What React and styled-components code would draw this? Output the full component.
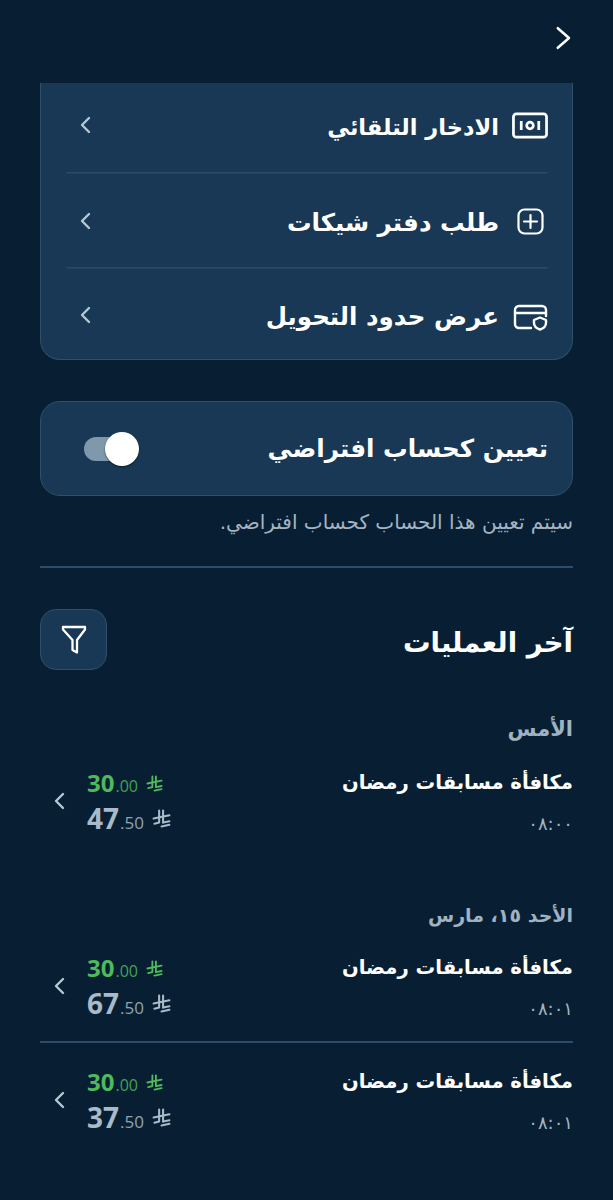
import React from 'react';
import styled, { createGlobalStyle } from 'styled-components';

const Global = createGlobalStyle`
  html, body { margin: 0; padding: 0; background: #081f33; }
  body { font-family: "DejaVu Sans", sans-serif; }
`;
const Page = styled.div`
  width: 613px; height: 1200px; overflow: hidden; direction: rtl; color: #fff;
  background: #081f33;
`;
const TopBar = styled.header`
  height: 83px; box-sizing: border-box; padding: 24px 37px 0 0; display: flex; justify-content: flex-start;
`;
const Content = styled.main`
  padding: 0 40px;
  display: flex; flex-direction: column;
`;
const MenuCard = styled.section`
  background: #183855; border: 1px solid #2e5068; border-top: none;
  border-radius: 0 0 20px 20px; padding: 0 24px 0 25px; height: 277px; box-sizing: border-box;
`;
const MenuRow = styled.div`
  display: flex; align-items: center; height: ${p => p.$h}px;
  padding: ${p => p.$pt || 0}px 0 ${p => p.$pb || 0}px; box-sizing: border-box;
  box-shadow: ${p => p.$last ? 'none' : '0 2px 0 -0.5px #2b4b66'};
`;
const MenuIcon = styled.span`
  width: 36px; height: 36px; display: flex; align-items: center; justify-content: center; flex: none;
  padding-top: ${p => p.$drop || 0}px;
`;
const MenuLabel = styled.span`
  font-size: ${p => p.$tight ? 22.5 : 24.5}px; font-weight: 700; margin-right: 13px; flex: 1; line-height: 36px;
  padding-top: 4px;
`;
const ChevronSlot = styled.span`
  display: flex; margin-left: 10px; color: #b4c8d6;
`;
const ToggleCard = styled.section`
  margin-top: 41px; height: 95px; box-sizing: border-box; background: #183855; border: 1px solid #2e5068;
  border-radius: 20px; display: flex; align-items: center; justify-content: space-between; padding: 0 24px 0 43px;
`;
const ToggleLabel = styled.span`
  font-size: 24.6px; font-weight: 700;
`;
const Track = styled.span`
  position: relative; display: block; width: 45px; height: 24px; border-radius: 12px; background: #7f98ac;
`;
const Knob = styled.span`
  position: absolute; left: 21px; top: -5px; width: 34px; height: 34px; border-radius: 50%; background: #fff;
  box-shadow: 0 1px 2px rgba(0,0,0,.5);
`;
const Hint = styled.p`
  margin: 13px 0 0; font-size: 20px; color: #a3b4c2; line-height: 26px;
`;
const Divider = styled.hr`
  border: none; height: 2px; background: #2d4d68; margin: 31px 0 0;
`;
const SectionHead = styled.div`
  display: flex; align-items: center; justify-content: space-between; margin-top: 41px;
`;
const SectionTitle = styled.h2`
  margin: 0; padding-top: 4px; font-size: 27.5px; font-weight: 700;
`;
const FilterBtn = styled.button`
  width: 67px; height: 61px; border-radius: 16px; background: #183855; border: 1px solid #2e5068; padding: 0;
  display: flex; align-items: center; justify-content: center;
`;
const DayLabel = styled.div`
  font-size: ${p => p.$fs || 21}px; font-weight: 700; color: #9fb2c2; margin-top: ${p => p.$mt}px; line-height: 30px;
`;
const Tx = styled.div`
  display: flex; justify-content: space-between; align-items: flex-start; height: ${p => p.$h || 100}px;
  box-sizing: border-box; padding-top: ${p => p.$pt || 0}px;
  border-bottom: ${p => p.$line ? '2px solid #2d4d68' : 'none'};
`;
const TxMain = styled.div`
  display: flex; flex-direction: column;
`;
const TxTitle = styled.div`
  font-size: 19.6px; font-weight: 700; line-height: 32px;
`;
const TxTime = styled.div`
  font-size: 18px; color: #a3b4c2; margin-top: 12px; line-height: 26px;
`;
const TxSide = styled.div`
  display: flex; align-items: center; gap: 17px; margin-left: 10px; margin-top: 1px; color: #b4c8d6;
`;
const Amounts = styled.div`
  display: flex; flex-direction: column; gap: 5px; direction: ltr; width: 84px;
`;
const Amount = styled.div`
  display: flex; align-items: baseline; color: ${p => p.$c}; height: 30px; font-family: "Open Sans", sans-serif; line-height: 30px;
`;
const Whole = styled.span`
  font-size: ${p => p.$big ? 28 : 24}px; font-weight: 700;
`;
const Frac = styled.span`
  font-size: ${p => p.$big ? 17 : 16}px; font-weight: 400; opacity: .85; margin: 0 8px 0 1px;
`;
const RiyalSlot = styled.span`
  display: flex; align-self: center;
`;

const Chev = ({ size = 20, dir = 'left', sw = 2.4, color = 'currentColor' }) => (
  <svg width={size} height={size} viewBox="0 0 20 20" fill="none" stroke={color} strokeWidth={sw} strokeLinecap="round" strokeLinejoin="round">
    {dir === 'left' ? <path d="M13 3 L6 10 L13 17" /> : <path d="M7 3 L15 10 L7 17" />}
  </svg>
);
const Riyal = ({ size, color }) => (
  <svg width={size} height={size} viewBox="0 0 24 24" fill="none" stroke={color} strokeWidth="2.6" strokeLinecap="round" strokeLinejoin="round">
    <path d="M9 2 V17 L3 18.5" /><path d="M14 2 V17" /><path d="M2 12 L22 8" /><path d="M14 17 L22 15.5" /><path d="M12 22 L22 20" />
  </svg>
);
const CashIcon = () => (
  <svg width="37" height="27" viewBox="0 0 37 27" fill="none" stroke="#fff" strokeWidth="2.8">
    <rect x="1.5" y="1.5" width="34" height="24" rx="3" />
    <circle cx="18.5" cy="13.5" r="3.4" />
    <path d="M9.5 9 V18 M27.5 9 V18" />
  </svg>
);
const PlusIcon = () => (
  <svg width="27" height="27" viewBox="0 0 27 27" fill="none" stroke="#fff" strokeWidth="2.2" strokeLinecap="round">
    <rect x="1.5" y="1.5" width="24" height="24" rx="6" />
    <path d="M13.5 7 V20 M7 13.5 H20" />
  </svg>
);
const CardIcon = () => (
  <svg width="35" height="27" viewBox="0 0 35 27" fill="none" stroke="#fff" strokeWidth="2.4" strokeLinecap="round" strokeLinejoin="round">
    <path d="M18 24 H6 a4 4 0 0 1 -4 -4 V6 a4 4 0 0 1 4 -4 H29 a4 4 0 0 1 4 4 V12" />
    <path d="M2 9 H33" />
    <path d="M21 16 L27 13.5 L33 16 V19 C33 22 30 24.5 27 25.5 C24 24.5 21 22 21 19 Z" />
  </svg>
);
const FunnelIcon = () => (
  <svg width="26" height="30" viewBox="0 0 26 30" fill="none" stroke="#fff" strokeWidth="2.3" strokeLinejoin="round">
    <path d="M2 2 H24 V4.5 L16 15 V27.5 L11.5 25 V15 L2 4.5 Z" />
  </svg>
);

const menu = [
  { label: 'الادخار التلقائي', icon: <CashIcon />, h: 89, pb: 5, tight: true },
  { label: 'طلب دفتر شيكات', icon: <PlusIcon />, h: 95, pt: 3 },
  { label: 'عرض حدود التحويل', icon: <CardIcon />, h: 92, pt: 4, last: true, drop: 4 },
];

const Transaction = ({ time, bal, h, pt, line }) => (
  <Tx $h={h} $pt={pt} $line={line}>
    <TxMain>
      <TxTitle>مكافأة مسابقات رمضان</TxTitle>
      <TxTime>{time}</TxTime>
    </TxMain>
    <TxSide>
      <Amounts>
        <Amount $c="#4fb95c"><Whole>30</Whole><Frac>.00</Frac><RiyalSlot><Riyal size={17} color="#4fb95c" /></RiyalSlot></Amount>
        <Amount $c="#a9bac8"><Whole $big>{bal}</Whole><Frac $big>.50</Frac><RiyalSlot><Riyal size={19} color="#a9bac8" /></RiyalSlot></Amount>
      </Amounts>
      <Chev size={20} />
    </TxSide>
  </Tx>
);

export default function App() {
  return (
    <Page>
      <Global />
      <TopBar><Chev size={28} dir="right" sw={1.8} /></TopBar>
      <Content>
        <MenuCard>
          {menu.map(m => (
            <MenuRow key={m.label} $h={m.h} $pt={m.pt} $pb={m.pb} $last={m.last}>
              <MenuIcon $drop={m.drop}>{m.icon}</MenuIcon>
              <MenuLabel $tight={m.tight}>{m.label}</MenuLabel>
              <ChevronSlot><Chev size={20} /></ChevronSlot>
            </MenuRow>
          ))}
        </MenuCard>
        <ToggleCard>
          <ToggleLabel>تعيين كحساب افتراضي</ToggleLabel>
          <Track><Knob /></Track>
        </ToggleCard>
        <Hint>سيتم تعيين هذا الحساب كحساب افتراضي.</Hint>
        <Divider />
        <SectionHead>
          <SectionTitle>آخر العمليات</SectionTitle>
          <FilterBtn><FunnelIcon /></FilterBtn>
        </SectionHead>
        <DayLabel $mt={44}>الأمس</DayLabel>
        <Transaction time="۰۸:۰۰" bal="47" h={156} pt={23} />
        <DayLabel $mt={0} $fs={19}>الأحد ١٥، مارس</DayLabel>
        <Transaction time="۰۸:۰۱" bal="67" h={113} pt={22} line />
        <Transaction time="۰۸:۰۱" bal="37" h={100} pt={23} />
      </Content>
    </Page>
  );
}
